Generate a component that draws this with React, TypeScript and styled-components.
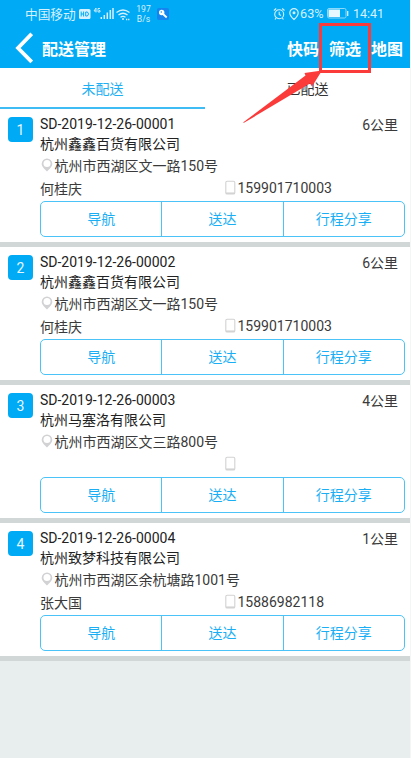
import styled, { createGlobalStyle } from 'styled-components';

const GlobalStyle = createGlobalStyle`
  * {
    box-sizing: border-box;
  }

  body {
    margin: 0;
    background-color: #f4f6f6;
    font-family: Roboto, 'Noto Sans CJK SC', sans-serif;
    font-size: 14px;
    color: #3a3a3a;
  }
`;

const Screen = styled.main`
  position: relative;
  width: 410px;
  height: 758px;
  overflow: hidden;
  background-color: #e8edee;
`;

const Header = styled.header`
  height: 68px;
  background-color: #00aaf4;
  color: #fff;
`;

const StatusBar = styled.div`
  display: flex;
  align-items: center;
  height: 27px;
  padding: 0 26px 0 25px;
  color: #d5f1ff;

  svg {
    flex: none;
  }
`;

const Carrier = styled.span`
  width: 53px;
  font-size: 12.7px;
  white-space: nowrap;
`;

const NetSpeed = styled.span`
  width: 17px;
  margin-left: 4px;
  font-size: 8.6px;
  line-height: 10px;
  text-align: center;
`;

const StatusRight = styled.div`
  display: flex;
  align-items: center;
  margin-left: auto;
`;

const Percent = styled.span`
  width: 24px;
  font-size: 12.7px;
`;

const Clock = styled.span`
  width: 31px;
  margin-left: 4px;
  font-size: 12.5px;
`;

const NavBar = styled.nav`
  display: flex;
  align-items: center;
  height: 41px;
  padding: 0 7px 0 15px;
`;

const Title = styled.h1`
  margin: 0 0 0 9px;
  font-size: 16px;
  font-weight: 700;
`;

const NavActions = styled.div`
  display: flex;
  gap: 10px;
  margin-left: auto;
  font-size: 16px;
  font-weight: 700;
`;

const Tabs = styled.div`
  display: flex;
  height: 41px;
  background-color: #fff;
`;

const Tab = styled.div<{ $active?: boolean }>`
  flex: 1;
  padding-top: 11px;
  line-height: 20px;
  text-align: center;
  color: ${({ $active }) => ($active ? '#1eb0f3' : '#333')};
  border-bottom: 2px solid ${({ $active }) => ($active ? '#3fbcf3' : '#fff')};
`;

const Card = styled.article`
  display: flex;
  height: 138px;
  padding: 6px 5px 0 8px;
  background-color: #fff;
  border-bottom: 5px solid #d1d6d6;
`;

const Badge = styled.div`
  flex: none;
  width: 25px;
  height: 25px;
  margin: 2px 7px 0 0;
  border-radius: 4px;
  background-color: #00aaf4;
  color: #e4f6ff;
  line-height: 26px;
  text-align: center;
`;

const CardBody = styled.div`
  flex: 1;
`;

const Row = styled.div<{ $height: number }>`
  display: flex;
  align-items: center;
  height: ${({ $height }) => $height}px;
  white-space: nowrap;
`;

const OrderNo = styled.span`
  color: #222;
`;

const Distance = styled.span`
  margin: 0 7px 0 auto;
`;

const Person = styled.span`
  width: 184.5px;
`;

const Actions = styled.div`
  display: flex;
  height: 36px;
  margin-top: 2px;
  border: 1px solid #4cc3f8;
  border-radius: 5px;
`;

const Action = styled.div`
  flex: 1;
  line-height: 34px;
  text-align: center;
  color: #1aaff5;

  & + & {
    border-left: 1px solid #4cc3f8;
  }
`;

const Annotation = styled.svg`
  position: absolute;
  top: 0;
  left: 0;
`;

const BackArrow = styled.svg`
  flex: none;
  width: 18px;
  height: 32px;
`;

const KeySvg = styled.svg`
  margin-left: 5px;
`;

const LocationSvg = styled.svg`
  margin-left: 2px;
`;

const BatterySvg = styled.svg`
  margin-left: 3px;
`;

const PinIcon = () => (
  <svg width="14.5" height="16" viewBox="0 0 14.5 16">
    <path
      d="M7 1.500a5.300 5.300 0 0 0-5.300 5.200C1.700 10 5 12.300 7 14.500c2-2.200 5.300-4.500 5.300-7.800A5.300 5.300 0 0 0 7 1.500z"
      fill="#d2d2d5"
    />
    <circle cx="7" cy="6.500" r="3.500" fill="#fff" />
  </svg>
);

const PhoneIcon = () => (
  <svg width="13" height="16" viewBox="0 0 13 16">
    <rect x="0.8" y="1.300" width="9" height="12.700" rx="1.300" fill="#fff" stroke="#d2d2d2" strokeWidth="1.100" />
    <path d="M1 13.200h8.600" stroke="#d2d2d2" strokeWidth="1.500" />
  </svg>
);

const StatusIcons = () => (
  <svg width="53" height="18" viewBox="0 0 53 18" fill="none" stroke="#d5f1ff">
    <rect x="1" y="4" width="11.500" height="10" rx="1.500" fill="#d5f1ff" stroke="none" />
    <path d="M3.200 6.500v5M3.200 9h2.400M5.600 6.500v5M7.700 7v4H9q1.400-.3 1.400-2T9 7H7.700" stroke="#00aaf4" />
    <path d="M18 3l-2 3h2.500M18 3v4.500M22 3.500h-2v3.500h2V5.500h-1" strokeWidth="0.900" />
    <path d="M23.300 14v-2M26.300 14v-4M29.300 14V7.500M32.300 14V5M35 14V3" strokeWidth="1.500" />
    <path d="M38.500 7.500q6.500-5 13 0M40.500 10q4.500-3.500 9 0M42.500 12.300q2.500-1.800 5 0" strokeWidth="1.300" />
    <circle cx="45" cy="14" r="1" fill="#d5f1ff" stroke="none" />
    <path d="M48 14.500h3.500" strokeDasharray="1.300 0.800" strokeWidth="1.500" />
  </svg>
);

const KeyIcon = () => (
  <KeySvg width="12" height="12" viewBox="0 0 12 12">
    <rect width="12" height="12" rx="2" fill="#1684ee" />
    <circle cx="4.700" cy="4.500" r="2.700" fill="#fff" />
    <path d="M6 6l3.700 3.500" stroke="#fff" strokeWidth="1.800" />
    <circle cx="4.300" cy="4" r="0.700" fill="#1684ee" />
  </KeySvg>
);

const AlarmIcon = () => (
  <svg width="13" height="14" viewBox="0 0 13 14" fill="none" stroke="#d5f1ff" strokeWidth="1.100">
    <circle cx="6.200" cy="7.300" r="4.500" />
    <path d="M6.200 4.800v2.700l1.800 1M.9 3.500l2.300-2M9.200 1.500l2.300 2M3 11.200l-1 1.300M9.400 11.200l1 1.300" />
  </svg>
);

const LocationIcon = () => (
  <LocationSvg width="12" height="14" viewBox="0 0 12 14" fill="none" stroke="#d5f1ff" strokeWidth="1.200">
    <path d="M6 1.700a4.200 4.200 0 0 0-4.200 4.200c0 2.800 4.200 6.600 4.200 6.600s4.200-3.800 4.200-6.600A4.200 4.200 0 0 0 6 1.700z" />
    <circle cx="6" cy="5.800" r="0.900" fill="#d5f1ff" />
  </LocationSvg>
);

const BatteryIcon = () => (
  <BatterySvg width="22" height="11" viewBox="0 0 22 11">
    <rect x="0.500" y="0.500" width="18.500" height="9.500" rx="1.500" fill="none" stroke="#8bd9fb" />
    <rect x="1.500" y="1.500" width="11.500" height="7.500" fill="#e8f8ff" />
    <path d="M20.700 3v5" stroke="#d5f1ff" strokeWidth="1.300" />
  </BatterySvg>
);

const orders = [
  { no: 'SD-2019-12-26-00001', company: '杭州鑫鑫百货有限公司', address: '杭州市西湖区文一路150号', person: '何桂庆', phone: '159901710003', km: 6 },
  { no: 'SD-2019-12-26-00002', company: '杭州鑫鑫百货有限公司', address: '杭州市西湖区文一路150号', person: '何桂庆', phone: '159901710003', km: 6 },
  { no: 'SD-2019-12-26-00003', company: '杭州马塞洛有限公司', address: '杭州市西湖区文三路800号', person: '', phone: '', km: 4 },
  { no: 'SD-2019-12-26-00004', company: '杭州致梦科技有限公司', address: '杭州市西湖区余杭塘路1001号', person: '张大国', phone: '15886982118', km: 1 },
];

const App = () => {
  return (
    <Screen>
      <GlobalStyle />
      <Header>
        <StatusBar>
          <Carrier>中国移动</Carrier>
          <StatusIcons />
          <NetSpeed>
            197
            <br />
            B/s
          </NetSpeed>
          <KeyIcon />
          <StatusRight>
            <AlarmIcon />
            <LocationIcon />
            <Percent>63%</Percent>
            <BatteryIcon />
            <Clock>14:41</Clock>
          </StatusRight>
        </StatusBar>
        <NavBar>
          <BackArrow viewBox="0 0 18 32">
            <path d="M16.700 1.800L3 16l13.700 14" fill="none" stroke="#fff" strokeWidth="3.800" />
          </BackArrow>
          <Title>配送管理</Title>
          <NavActions>
            <span>快码</span>
            <span>筛选</span>
            <span>地图</span>
          </NavActions>
        </NavBar>
      </Header>
      <Tabs>
        <Tab $active>未配送</Tab>
        <Tab>已配送</Tab>
      </Tabs>
      {orders.map((order, index) => (
        <Card key={order.no}>
          <Badge>{index + 1}</Badge>
          <CardBody>
            <Row $height={18}>
              <OrderNo>{order.no}</OrderNo>
              <Distance>{order.km}公里</Distance>
            </Row>
            <Row $height={20}>
              <OrderNo>{order.company}</OrderNo>
            </Row>
            <Row $height={24}>
              <PinIcon />
              {order.address}
            </Row>
            <Row $height={22}>
              <Person>{order.person}</Person>
              <PhoneIcon />
              {order.phone}
            </Row>
            <Actions>
              <Action>导航</Action>
              <Action>送达</Action>
              <Action>行程分享</Action>
            </Actions>
          </CardBody>
        </Card>
      ))}
      <Annotation width="410" height="200" viewBox="0 0 410 200">
        <rect x="320.500" y="24.500" width="49" height="47" fill="none" stroke="#fb3a3a" strokeWidth="3" />
        <path d="M243 122.500L305.500 75.500L304.500 73L322 70.500L312 86.500L310 83.500L244 122.800z" fill="#fb3a3a" />
      </Annotation>
    </Screen>
  );
};

export default App;
